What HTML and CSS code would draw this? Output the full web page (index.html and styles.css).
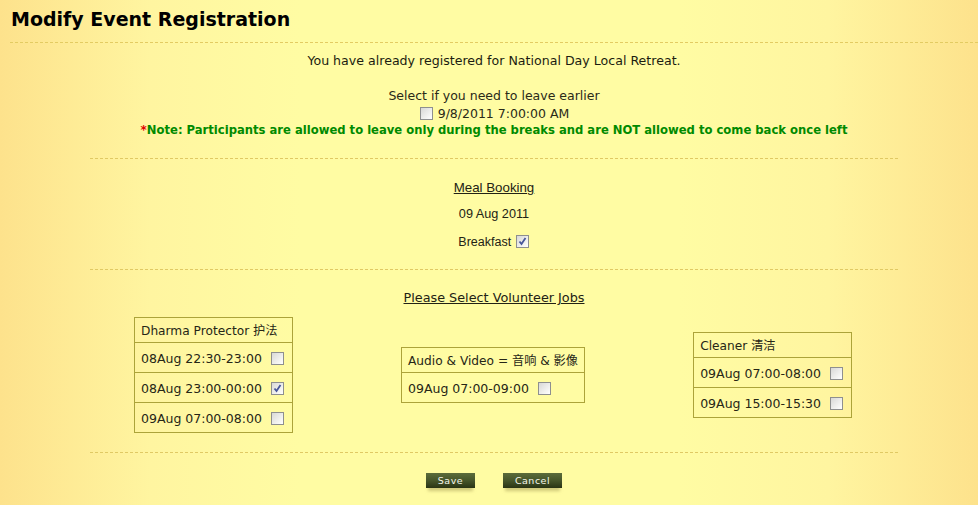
FILE: index.html
```html
<!DOCTYPE html>
<html>
<head>
<meta charset="utf-8">
<title>Modify Event Registration</title>
<link rel="stylesheet" href="styles.css">
</head>
<body>
<div class="page">
  <h1 class="title">Modify Event Registration</h1>
  <div class="content">
    <hr class="rule-full">
    <p class="already">You have already registered for National Day Local Retreat.</p>
    <p class="select">Select if you need to leave earlier</p>
    <p class="leave"><input type="checkbox" class="cb"> 9/8/2011 7:00:00 AM</p>
    <p class="note"><span class="star">*</span>Note: Participants are allowed to leave only during the breaks and are NOT allowed to come back once left</p>
    <hr class="rule">
    <p class="meal-head"><span class="ul">Meal Booking</span></p>
    <p class="meal-date">09 Aug 2011</p>
    <p class="meal-item">Breakfast <input type="checkbox" class="cb cb-meal" checked></p>
    <hr class="rule">
    <p class="jobs-head"><span class="ul">Please Select Volunteer Jobs</span></p>
    <div class="jobs">
      <table class="job">
        <tr><th>Dharma Protector 护法</th></tr>
        <tr><td>08Aug 22:30-23:00 <input type="checkbox" class="cb"></td></tr>
        <tr><td>08Aug 23:00-00:00 <input type="checkbox" class="cb" checked></td></tr>
        <tr><td>09Aug 07:00-08:00 <input type="checkbox" class="cb"></td></tr>
      </table>
      <table class="job">
        <tr><th>Audio &amp; Video = 音响 &amp; 影像</th></tr>
        <tr><td>09Aug 07:00-09:00 <input type="checkbox" class="cb"></td></tr>
      </table>
      <table class="job">
        <tr><th>Cleaner 清洁</th></tr>
        <tr><td>09Aug 07:00-08:00 <input type="checkbox" class="cb"></td></tr>
        <tr><td>09Aug 15:00-15:30 <input type="checkbox" class="cb"></td></tr>
      </table>
    </div>
    <hr class="rule">
    <div class="actions">
      <button class="btn btn-save">Save</button>
      <button class="btn btn-cancel">Cancel</button>
    </div>
  </div>
</div>
</body>
</html>
```
FILE: styles.css
```css
html, body {
  margin: 0;
  padding: 0;
  height: 100%;
}
body {
  font-family: "DejaVu Sans", Verdana, "Noto Sans CJK SC", sans-serif;
  color: #1c1c10;
  background: linear-gradient(to right, #fde28c 0px, #fff5a0 150px, #fffca3 300px, #fffca3 calc(100% - 300px), #fff5a0 calc(100% - 150px), #fde28c 100%);
}
.page {
  padding-top: 6px;
}
.title {
  margin: 0 0 0 11px;
  font-size: 19px;
  line-height: 26px;
  font-weight: bold;
  color: #000;
}
.content {
  margin-left: 10px;
  text-align: center;
}
.rule-full {
  margin: 10px 0 0 0;
  border: 0;
  border-top: 1px dashed #e3cb62;
  height: 0;
}
.rule {
  width: 808px;
  margin: 0 auto;
  border: 0;
  border-top: 1px dashed #e0c964;
  height: 0;
}
p {
  margin: 0;
}
.already {
  margin-top: 10px;
  font-size: 12.6px;
  line-height: 16px;
}
.select {
  margin-top: 19px;
  font-size: 12.5px;
  line-height: 16px;
  color: #2a2a18;
}
.leave {
  margin-top: 2px;
  font-size: 12.5px;
  line-height: 16px;
  color: #2a2a18;
}
.note {
  margin-top: 1px;
  margin-bottom: 21px;
  font-size: 11.6px;
  line-height: 14px;
  font-weight: bold;
  color: #008a00;
}
.star {
  color: #e00000;
  font-size: 12px;
}
.meal-head {
  margin-top: 21px;
  font-family: "Liberation Sans", Arial, sans-serif;
  font-size: 13.3px;
  line-height: 16px;
  color: #222214;
}
.ul {
  text-decoration: underline;
}
.meal-date {
  margin-top: 11px;
  font-family: "Liberation Sans", Arial, sans-serif;
  font-size: 12.7px;
  line-height: 14px;
  color: #222214;
}
.meal-item {
  margin-top: 13px;
  margin-bottom: 19px;
  font-family: "Liberation Sans", Arial, sans-serif;
  font-size: 12.5px;
  line-height: 16px;
  color: #222214;
}
.cb-meal {
  margin-left: 4px;
}
.jobs-head {
  margin-top: 20px;
  font-size: 12.8px;
  line-height: 16px;
  color: #222214;
}
.jobs {
  width: 808px;
  box-sizing: border-box;
  margin: 11px auto 19px;
  padding: 0 46px 0 44px;
  display: flex;
  justify-content: space-between;
  align-items: center;
}
.job {
  border-collapse: collapse;
  border: 1px solid #aca33a;
  font-size: 12.5px;
  color: #262616;
}
.job th, .job td {
  border: 1px solid #aca33a;
  text-align: left;
  font-weight: normal;
  white-space: nowrap;
}
.job th {
  padding: 5px 6px 3px;
  line-height: 16px;
  font-size: 12.2px;
}
.job td {
  padding: 8px 7px 6px 6px;
  line-height: 15px;
}
.job td .cb {
  margin-left: 5px;
}
.cb {
  -webkit-appearance: none;
  appearance: none;
  width: 13px;
  height: 13px;
  margin: 0 1px;
  border: 1px solid #8e8f8f;
  box-sizing: border-box;
  background: linear-gradient(135deg, #d8d8d6 0%, #f4f4f2 70%, #ffffff 100%);
  vertical-align: -2px;
}
.cb:checked {
  background-image: url("data:image/svg+xml;utf8,<svg xmlns='http://www.w3.org/2000/svg' width='11' height='11'><path d='M2.5 5.5 L4.5 8 L8.5 2' fill='none' stroke='%2348579a' stroke-width='1.8'/></svg>"), linear-gradient(135deg, #d8d8d6 0%, #f4f4f2 70%, #ffffff 100%);
  background-repeat: no-repeat;
}
.actions {
  display: flex;
  justify-content: center;
  gap: 28px;
  margin-top: 20px;
}
.btn {
  height: 15px;
  padding: 0;
  border: 0;
  font-family: "DejaVu Sans", Verdana, sans-serif;
  font-size: 9.5px;
  letter-spacing: 0.5px;
  color: #f4f6ec;
  background: linear-gradient(to bottom, #5c6c3a 0%, #46552a 50%, #2a3414 100%);
  box-shadow: 0 5px 3px -2px rgba(170, 160, 90, 0.55);
}
.btn-save {
  width: 49px;
}
.btn-cancel {
  width: 59px;
}
```
